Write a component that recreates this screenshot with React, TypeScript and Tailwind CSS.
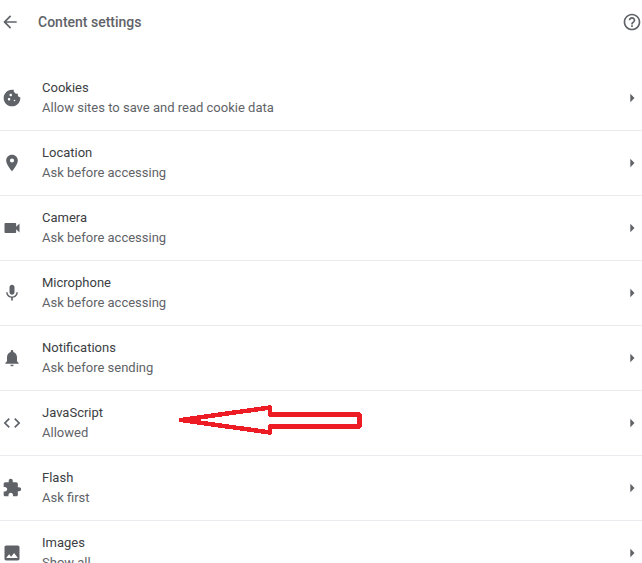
import React from 'react';
import {
  MdArrowBack,
  MdArrowRight,
  MdCode,
  MdCookie,
  MdExtension,
  MdHelpOutline,
  MdInsertPhoto,
  MdLocationOn,
  MdMic,
  MdNotifications,
  MdVideocam,
} from 'react-icons/md';

const rows = [
  { icon: MdCookie, title: 'Cookies', sub: 'Allow sites to save and read cookie data' },
  { icon: MdLocationOn, title: 'Location', sub: 'Ask before accessing' },
  { icon: MdVideocam, title: 'Camera', sub: 'Ask before accessing' },
  { icon: MdMic, title: 'Microphone', sub: 'Ask before accessing' },
  { icon: MdNotifications, title: 'Notifications', sub: 'Ask before sending' },
  { icon: MdCode, title: 'JavaScript', sub: 'Allowed' },
  { icon: MdExtension, title: 'Flash', sub: 'Ask first' },
  { icon: MdInsertPhoto, title: 'Images', sub: 'Show all' },
];

export default function App() {
  return (
    <div className="relative h-[563px] w-[642px] overflow-hidden bg-white font-['Roboto',sans-serif] text-[13px]">
      <div className="flex h-[44px] items-center text-[#5f6368]">
        <MdArrowBack size={20} />
        <span className="ml-[18px] flex-1 text-[14px] font-medium">Content settings</span>
        <MdHelpOutline size={20} />
      </div>
      <div className="mt-[21px]">
        {rows.map((row, i) => (
          <div
            key={row.title}
            className={`flex h-[65px] items-center pl-[2px] text-[#5f6368] ${i > 0 ? 'border-t border-[#e8eaed]' : ''}`}
          >
            <row.icon size={20} />
            <div className="ml-[20px] flex-1 leading-[20px]">
              <div className="text-[#3c4043]">{row.title}</div>
              <div>{row.sub}</div>
            </div>
            <MdArrowRight size={20} />
          </div>
        ))}
      </div>
      {/* red annotation arrow pointing at the JavaScript row */}
      <svg className="absolute left-[170px] top-[395px]" width="200" height="50" viewBox="0 0 200 50">
        <path
          d="M11 25 L100 12.5 L100 19.5 L189.5 19.5 L189.5 31.5 L100 31.5 L100 37.5 Z"
          fill="none"
          stroke="#ed1c24"
          strokeWidth="4.5"
          strokeLinejoin="round"
          shapeRendering="crispEdges"
        />
      </svg>
    </div>
  );
}
